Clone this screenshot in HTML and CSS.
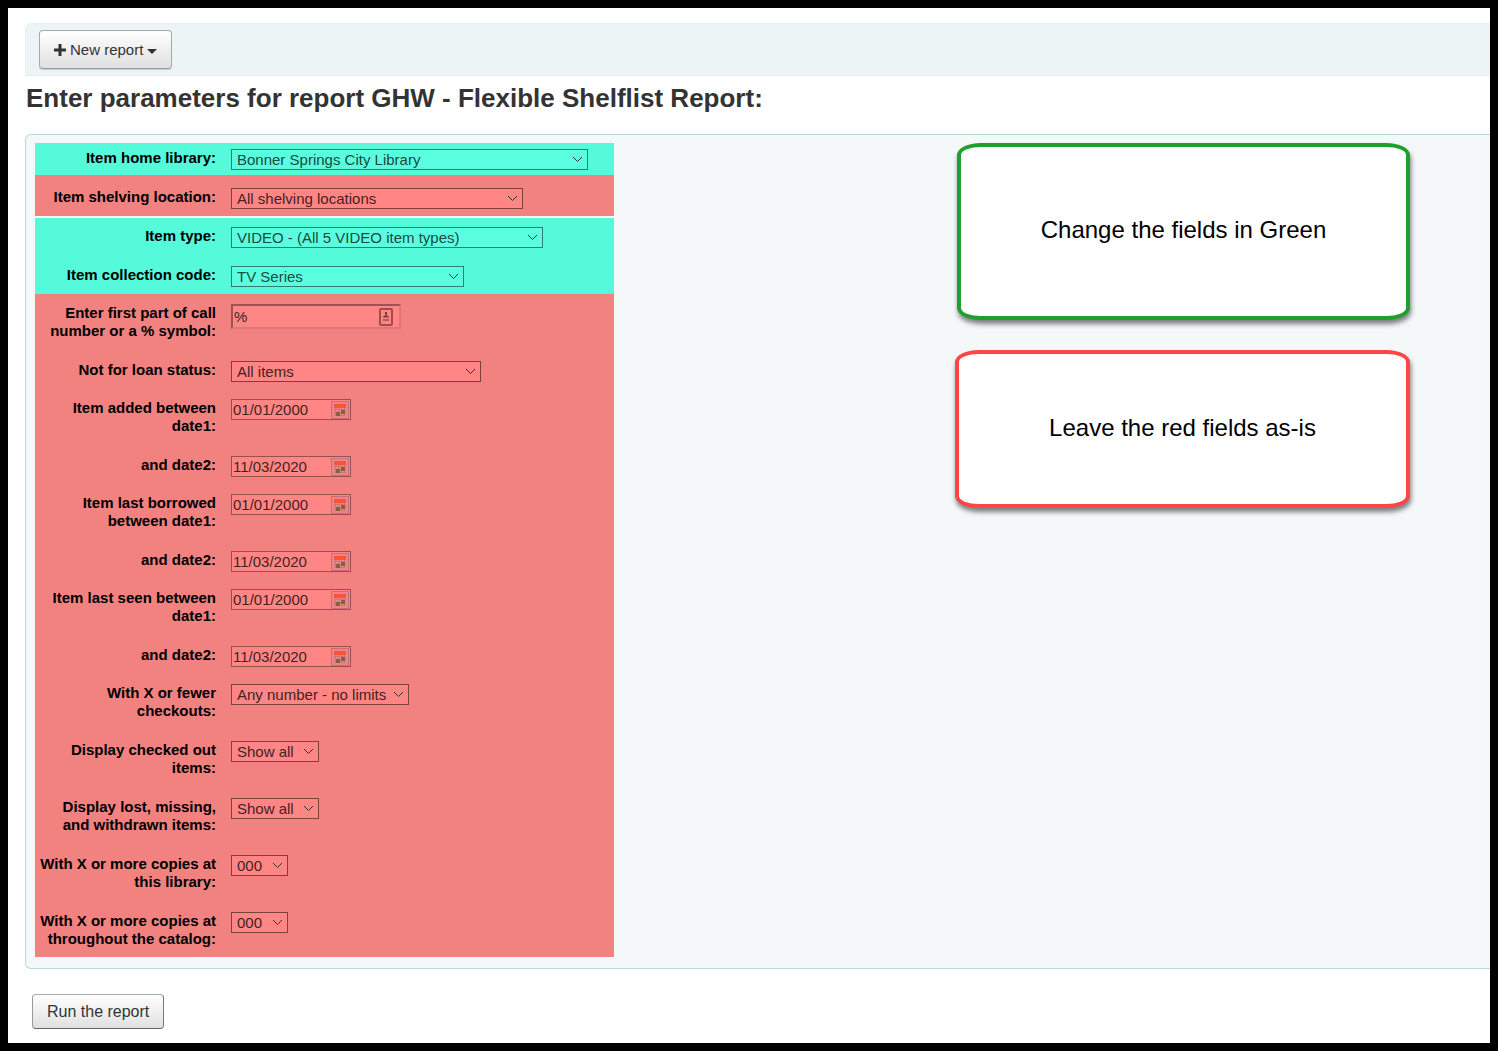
FILE: index.html
```html
<!DOCTYPE html>
<html lang="en">
<head>
<meta charset="utf-8">
<title>Flexible Shelflist Report</title>
<link rel="stylesheet" href="styles.css">
</head>
<body>
<svg width="0" height="0" class="defs" aria-hidden="true">
  <symbol id="calendar" viewBox="0 0 18 18">
    <rect x=".5" y=".5" width="17" height="17" fill="#ec8588" stroke="#cc6c78"/>
    <path d="M3 8.500h12M3 11.500h12M3 14.500h12M4.500 7v8M7.500 7v8M10.500 7v8M13.500 7v8" stroke="#c9767c" fill="none"/>
    <rect x="3" y="3" width="12" height="4" fill="#ff5236"/>
    <rect x="5" y="11" width="4" height="4" fill="#86603c"/>
    <rect x="10" y="9" width="4" height="4" fill="#86603c"/>
  </symbol>
</svg>
<main class="page">
  <div class="toolbar">
    <button type="button" class="btn btn-new">
      <svg width="12" height="12" viewBox="0 0 12 12" aria-hidden="true"><path d="M4.500 0h3v4.500H12v3H7.500V12h-3V7.500H0v-3h4.500z" fill="#333"/></svg>
      New report
      <svg class="caret" width="10" height="5" viewBox="0 0 10 5" aria-hidden="true"><path d="M0 0h10L5 5z" fill="#333"/></svg>
    </button>
  </div>
  <h1>Enter parameters for report GHW - Flexible Shelflist Report:</h1>
  <form>
    <div class="panel">
      <div class="fields">
        <div class="band green band-library">
          <div class="row"><label for="library">Item home library:</label><select id="library" class="w-library"><option>Bonner Springs City Library</option></select></div>
        </div>
        <div class="band red band-location">
          <div class="row"><label for="location">Item shelving location:</label><select id="location" class="w-location"><option>All shelving locations</option></select></div>
        </div>
        <div class="band green band-type">
          <div class="row"><label for="itype">Item type:</label><select id="itype" class="w-type"><option>VIDEO - (All 5 VIDEO item types)</option></select></div>
          <div class="row"><label for="ccode">Item collection code:</label><select id="ccode" class="w-code"><option>TV Series</option></select></div>
        </div>
        <div class="band red band-rest">
          <div class="row row-tall"><label for="callno">Enter first part of call number or a % symbol:</label>
            <div class="call"><input id="callno" type="text" value="%">
              <svg width="16" height="20" viewBox="0 0 16 20" aria-hidden="true"><rect x="2" y="2" width="12" height="16" rx="1" fill="none" stroke="#a04d4c" stroke-width="2"/><path d="M8 5v3" stroke="#803a3a" stroke-width="2"/><path d="M5 10.500c0-3 6-3 6 0z" fill="#803a3a"/><path d="M5 13h6" stroke="#b85c5b" stroke-width="2"/></svg>
            </div></div>
          <div class="row"><label for="loan">Not for loan status:</label><select id="loan" class="w-loan"><option>All items</option></select></div>
          <div class="row row-tall"><label for="added1">Item added between date1:</label><div class="date"><input id="added1" type="text" value="01/01/2000"><button type="button" aria-label="Pick date"><svg width="18" height="18"><use href="#calendar"/></svg></button></div></div>
          <div class="row"><label for="added2">and date2:</label><div class="date"><input id="added2" type="text" value="11/03/2020"><button type="button" aria-label="Pick date"><svg width="18" height="18"><use href="#calendar"/></svg></button></div></div>
          <div class="row row-tall"><label for="borrowed1">Item last borrowed between date1:</label><div class="date"><input id="borrowed1" type="text" value="01/01/2000"><button type="button" aria-label="Pick date"><svg width="18" height="18"><use href="#calendar"/></svg></button></div></div>
          <div class="row"><label for="borrowed2">and date2:</label><div class="date"><input id="borrowed2" type="text" value="11/03/2020"><button type="button" aria-label="Pick date"><svg width="18" height="18"><use href="#calendar"/></svg></button></div></div>
          <div class="row row-tall"><label for="seen1">Item last seen between date1:</label><div class="date"><input id="seen1" type="text" value="01/01/2000"><button type="button" aria-label="Pick date"><svg width="18" height="18"><use href="#calendar"/></svg></button></div></div>
          <div class="row"><label for="seen2">and date2:</label><div class="date"><input id="seen2" type="text" value="11/03/2020"><button type="button" aria-label="Pick date"><svg width="18" height="18"><use href="#calendar"/></svg></button></div></div>
          <div class="row row-tall"><label for="checkouts">With X or fewer checkouts:</label><select id="checkouts" class="w-checkouts"><option>Any number - no limits</option></select></div>
          <div class="row row-tall"><label for="out">Display checked out items:</label><select id="out" class="w-show"><option>Show all</option></select></div>
          <div class="row row-tall"><label for="lost">Display lost, missing, and withdrawn items:</label><select id="lost" class="w-show"><option>Show all</option></select></div>
          <div class="row row-tall"><label for="local">With X or more copies at this library:</label><select id="local" class="w-copies"><option>000</option></select></div>
          <div class="row row-tall"><label for="catalog">With X or more copies at throughout the catalog:</label><select id="catalog" class="w-copies"><option>000</option></select></div>
        </div>
      </div>
      <aside class="notes">
        <p class="note note-green">Change the fields in Green</p>
        <p class="note note-red">Leave the red fields as-is</p>
      </aside>
    </div>
    <button type="submit" class="btn btn-run">Run the report</button>
  </form>
</main>
</body>
</html>
```
FILE: styles.css
```css
* { box-sizing: border-box; }
body {
  margin: 0;
  background: #fff;
  color: #333;
  font-family: "Liberation Sans", Arial, sans-serif;
}
.defs { display: block; }
.page {
  min-height: 100vh;
  border: 8px solid #000;
  padding: 15px 0 14px 17px;
}
.toolbar {
  padding: 6px 13px;
  border: 1px solid #e6f0f2;
  border-right: 0;
  border-radius: 6px 0 0 0;
  background: #edf4f6;
}
.btn {
  border: 1px solid #999;
  border-radius: 4px;
  background: linear-gradient(#fff, #e0e0e0);
  color: #333;
  font-family: inherit;
}
.btn-new {
  display: flex;
  align-items: center;
  gap: 4px;
  height: 39px;
  padding: 0 14px;
  border-color: #aaa #aaa #999;
  box-shadow: 0 1px 1px #ccc;
  font-size: 15px;
}
.caret { margin-top: 3px; }
h1 {
  margin: 7px 0 21px 1px;
  font-size: 26px;
  line-height: 30px;
}
.panel {
  display: flex;
  justify-content: space-between;
  padding: 8px 80px 11px 9px;
  border: 1px solid #b9d8d9;
  border-right: 0;
  border-radius: 6px 0 0 6px;
  background: #f4f8f9;
}
.fields { width: 579px; }
.band {
  display: flex;
  flex-direction: column;
  gap: 17px;
}
.green { background: #55fadb; --field: #5affe0; --line: #2f7f70; --text: #1c4a42; }
.red { background: #f28280; --field: #ff8684; --line: #7d403f; --text: #452222; }
.band-library { padding: 6px 0 5px; }
.band-location { padding: 13px 0 7px; margin-bottom: 2px; }
.band-type { gap: 18px; padding: 9px 0 7px; }
.band-rest { padding: 10px 0 5px; }
.row {
  display: flex;
  align-items: flex-start;
  gap: 15px;
  padding-left: 3px;
}
.row-tall { padding-bottom: 1px; }
label {
  width: 178px;
  padding-bottom: 3px;
  color: #000;
  font-size: 15px;
  font-weight: bold;
  line-height: 18px;
  text-align: right;
}
select, input {
  color: var(--text);
  font-family: inherit;
  font-size: 15px;
}
select {
  appearance: none;
  height: 21px;
  padding: 0 5px;
  border: 1px solid var(--line);
  border-radius: 0;
  background: var(--field) url("data:image/svg+xml,%3Csvg xmlns='http://www.w3.org/2000/svg' width='11' height='7'%3E%3Cpath d='M1 1l4.500 4.500L10 1' fill='none' stroke='%23333'/%3E%3C/svg%3E") no-repeat right 4px center;
}
.w-library { width: 357px; }
.w-location { width: 292px; }
.w-type { width: 312px; }
.w-code { width: 233px; }
.w-loan { width: 250px; }
.w-checkouts { width: 178px; }
.w-show { width: 88px; }
.w-copies { width: 57px; }
.call, .date {
  display: flex;
  align-items: center;
  background: var(--field);
}
.call {
  width: 170px;
  height: 25px;
  padding-right: 5px;
  border: 2px solid;
  border-color: #a05252 #e07776 #e07776 #a05252;
}
.date {
  width: 120px;
  height: 21px;
  padding-right: 1px;
  border: 1px solid #9a5050;
}
.call input, .date input {
  flex: 1;
  min-width: 0;
  height: 18px;
  padding: 0 1px;
  border: 0;
  background: none;
}
.date button {
  display: flex;
  padding: 0;
  border: 0;
  background: none;
}
.notes {
  display: flex;
  flex-direction: column;
  align-items: flex-end;
  gap: 30px;
  font-size: 24px;
}
.note {
  display: flex;
  justify-content: center;
  margin: 0;
  border: 4px solid;
  border-radius: 24px / 12px;
  background: #fff;
  box-shadow: 1px 4px 5px rgba(0, 0, 0, .5);
  color: #000;
  line-height: 28px;
}
.note-green {
  width: 453px;
  padding: 69px 0 72px;
  border-color: #1f9f2f;
}
.note-red {
  width: 455px;
  padding: 60px 0 62px;
  border-color: #ff4545;
}
.btn-run {
  display: block;
  height: 35px;
  margin: 25px 0 0 7px;
  padding: 0 14px;
  border-color: #aaa #777 #666 #999;
  font-size: 16px;
}
```
